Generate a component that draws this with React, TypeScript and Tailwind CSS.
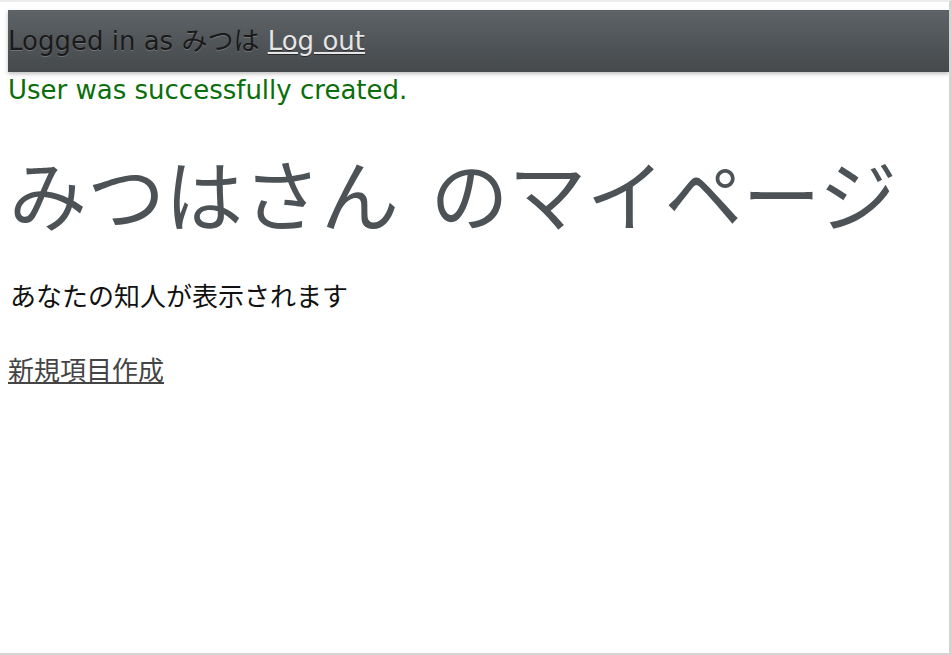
import React from 'react';

const App: React.FC = () => {
  return (
    <div className="w-[951px] h-[655px] bg-white border-t-2 border-t-[#ececec] border-r-2 border-r-[#d4d4d4] border-b-2 border-b-[#d4d4d4] overflow-hidden font-['DejaVu_Sans','Noto_Sans_CJK_JP',sans-serif]">
      <div className="pl-2 pt-2">
        <div className="h-[62px] flex items-center bg-gradient-to-b from-[#5e6367] to-[#45494c] shadow-[0_2px_4px_rgba(0,0,0,0.25)] text-[26px] text-[#1a1a1a] [text-shadow:0_1px_0_rgba(255,255,255,0.2)]">
          <span>Logged in as みつは&nbsp;</span>
          <a href="#" className="text-[#e6e6e6] underline [text-shadow:0_1px_0_rgba(0,0,0,0.5)]">Log out</a>
        </div>
        <p className="text-[26px] text-[#0a6e0a] leading-[36px] mt-0">User was successfully created.</p>
        <h1 className="text-[78px] text-[#4c5256] leading-none mt-[45px] ml-[1px] font-['Noto_Sans_CJK_JP',sans-serif] font-normal">
          <span className="mr-[14px]">みつはさん</span> のマイページ
        </h1>
        <p className="text-[26px] text-[#111] mt-[44px] ml-[2px] font-['Noto_Sans_CJK_JP',sans-serif]">あなたの知人が表示されます</p>
        <a href="#" className="block mt-[35px] text-[26px] text-[#444] underline font-['Noto_Sans_CJK_JP',sans-serif]">新規項目作成</a>
      </div>
    </div>
  );
};

export default App;
